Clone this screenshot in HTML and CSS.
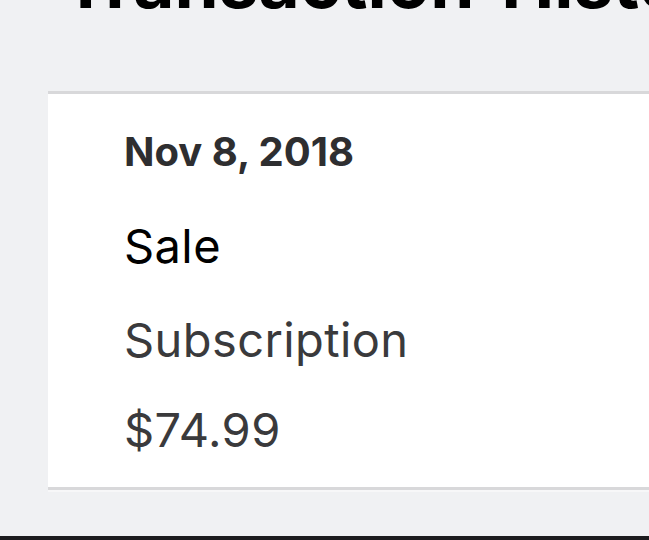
FILE: index.html
```html
<!DOCTYPE html>
<html lang="en">
<head>
<meta charset="utf-8">
<title>Transaction History</title>
<link rel="stylesheet" href="styles.css">
</head>
<body>
<main class="page">
  <h1 class="title">Transaction History</h1>
  <section class="card">
    <div class="date">Nov 8, 2018</div>
    <div class="type">Sale</div>
    <div class="item">Subscription</div>
    <div class="amount">$74.99</div>
  </section>
  <div class="bottom-bar"></div>
</main>
</body>
</html>
```
FILE: styles.css
```css
html, body {
  margin: 0;
  padding: 0;
  height: 100%;
  overflow: hidden;
}
body {
  background: #f0f1f3;
  font-family: Inter, "Noto Sans", sans-serif;
}
.page {
  display: flex;
  flex-direction: column;
  height: 100vh;
}
.title {
  margin: -53px 0 0 62px;
  font-size: 71px;
  line-height: 70px;
  font-weight: 700;
  color: #000;
  white-space: nowrap;
  word-spacing: 10px;
}
.card {
  margin: 74px 0 0 48px;
  background: #fff;
  border-top: 3px solid #d8d8da;
  border-bottom: 3px solid #d8d8da;
  box-shadow: 0 2px 0 #f7f7f8;
  padding: 33px 0 27px 76px;
  display: flex;
  flex-direction: column;
}
.date {
  font-size: 40px;
  line-height: 50px;
  font-weight: 700;
  color: #2e2e30;
}
.type, .item, .amount {
  font-size: 47px;
  line-height: 60px;
  font-weight: 400;
  letter-spacing: 0.4px;
}
.type {
  margin-top: 39px;
  color: #000;
}
.item {
  margin-top: 34px;
  color: #3a3a3c;
}
.amount {
  margin-top: 30px;
  color: #3a3a3c;
}
.bottom-bar {
  margin-top: auto;
  height: 4px;
  background: #1c1c1e;
  flex-shrink: 0;
}
```
